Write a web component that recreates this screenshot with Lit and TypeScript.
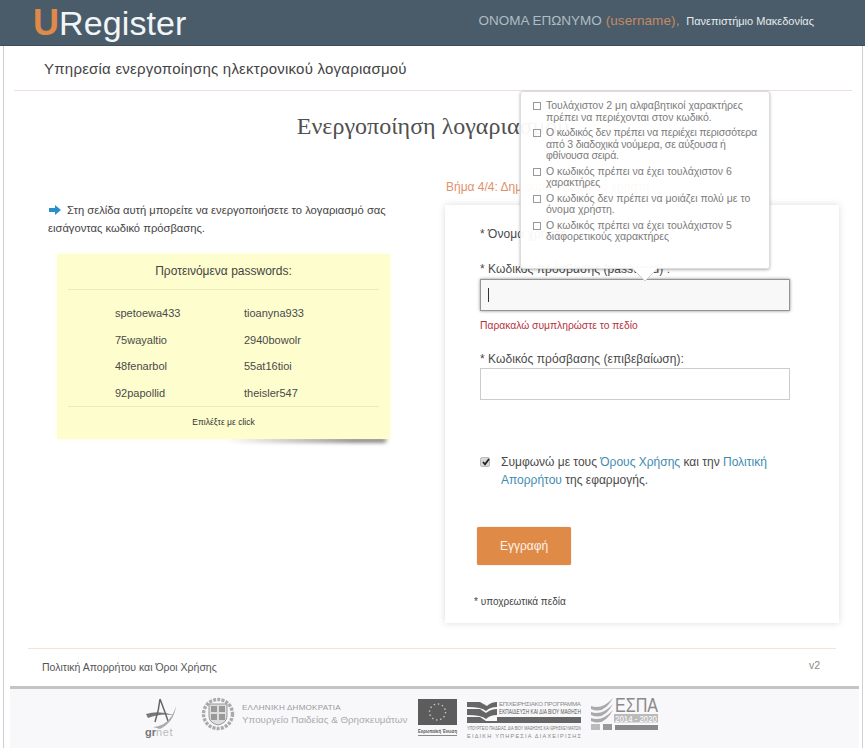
import { LitElement, html, css, svg } from "lit";
import { customElement } from "lit/decorators.js";

const rules = [
  { text: "Τουλάχιστον 2 μη αλφαβητικοί χαρακτήρες πρέπει να περιέχονται στον κωδικό.", tight: false },
  { text: "Ο κωδικός δεν πρέπει να περιέχει περισσότερα από 3 διαδοχικά νούμερα, σε αύξουσα ή φθίνουσα σειρά.", tight: true },
  { text: "Ο κωδικός πρέπει να έχει τουλάχιστον 6 χαρακτήρες", tight: false },
  { text: "Ο κωδικός δεν πρέπει να μοιάζει πολύ με το όνομα χρήστη.", tight: false },
  { text: "Ο κωδικός πρέπει να έχει τουλάχιστον 5 διαφορετικούς χαρακτήρες", tight: false },
];
const pw = ["spetoewa433","tioanyna933","75wayaltio","2940bowolr","48fenarbol","55at16tioi","92papollid","theisler547"];

@customElement("app-root")
export class AppRoot extends LitElement {
  static styles = css`
    :host { display:block; width:865px; height:748px; overflow:hidden; position:relative; background:#fff;
      font-family:"Liberation Sans",Arial,sans-serif; color:#444; }
    * { box-sizing:border-box; }
    header { height:46px; background:#4a5c69; border-bottom:1px solid #3f4e59; display:flex; align-items:center; justify-content:space-between; padding:0 51px 0 33px; }
    .logo { font-size:34px; color:#f2f5f7; letter-spacing:.1px; line-height:46px; }
    .logo b { color:#e08a4a; font-size:36px; }
    .user { font-size:13.5px; color:#aebcc4; padding-bottom:4px; }
    .user em { font-style:normal; color:#c58a62; letter-spacing:.1px; }
    .user small { font-size:11px; color:#e6ebee; margin-left:3px; }
    .page { margin:0 2px 0 3px; border-left:1px solid #cfcfcf; border-right:1px solid #cfcfcf; height:702px; display:flex; flex-direction:column; }
    .sub { flex:none; margin:0 10px; height:45px; border-bottom:1px solid #ecdfe0; padding:14px 0 0 30px; font-size:15px; line-height:18px; color:#444; letter-spacing:.23px; }
    h1 { flex:none; margin:20px 0 0; font:400 24px/30px "Liberation Serif",serif; color:#505050; text-align:center; height:31px; }
    .cols { flex:none; display:grid; grid-template-columns:441px 394px; height:506px; }
    .left { padding:59px 0 0 44px; }
    .info { font-size:11.2px; line-height:18px; color:#444; width:345px; }
    .info svg { vertical-align:-1px; margin-right:3px; margin-left:1px; }
    .notewrap { margin:17px 0 0 9px; width:333px; height:185px; position:relative; z-index:0; }
    .notewrap::after { content:""; position:absolute; z-index:-1; right:4px; bottom:-3px; width:160px; height:7px; background:linear-gradient(90deg,rgba(70,70,70,0),#444 80%); filter:blur(2px); }
    .note { height:100%; background:#fdfdcd; box-shadow:0 0 6px #fdfde8; padding:0 11px; }
    .note .t { height:36px; line-height:35px; text-align:center; font-size:12px; color:#444; border-bottom:1px solid #ece8c0; }
    .grid { display:grid; grid-template-columns:129px 1fr; padding:10px 0 0 47px; grid-auto-rows:26.6px; font-size:11px; line-height:26.6px; color:#4a4a4a; height:117px; border-bottom:1px solid #ece8c0; }
    .note .f { text-align:center; font-size:8.5px; line-height:30px; color:#333; }
    .step { font-size:12px; color:#e0916a; margin-top:36px; height:18px; line-height:18px; padding-left:1px; }
    .card { margin-top:9px; height:418px; background:#fff; box-shadow:0 0 7px rgba(0,0,0,.14); padding:20px 48px 0 35px; }
    label { display:block; font-size:12px; line-height:18px; color:#4a4a4a; letter-spacing:.05px; }
    .inp { width:310px; height:32px; border:1px solid #ccc; background:#fff; display:block; }
    .lp { margin-top:17px; }
    .inp.focus { margin-top:1px; background:#f8f8f8; border:1px solid #959595; box-shadow:0 0 3px rgba(0,0,0,.45); position:relative; }
    .inp.focus::before { content:""; position:absolute; left:7px; top:8px; width:1px; height:14px; background:#333; }
    .err { font-size:10.3px; color:#b3333f; margin-top:8px; line-height:14px; }
    .l3 { margin-top:17px; }
    .terms { display:flex; margin-top:53px; font-size:12px; line-height:18px; color:#4a4a4a; }
    .cb { width:10px; height:10px; background:#d8d8d8; border:1px solid #bbb; border-radius:2px; flex:none; margin:4px 11px 0 0; position:relative; }
    .cb svg { position:absolute; left:0; top:-1px; }
    a { color:#3e8bb0; text-decoration:none; }
    .btn { margin:38px 0 0 -3px; width:94px; height:38px; background:#e08a48; border-radius:2px; color:#fdf3ea; display:flex; align-items:center; justify-content:center; font-size:12px; box-shadow:0 0 1px #c77; }
    .req { margin:30px 0 0 -6px; font-size:10px; line-height:14px; color:#444; }
    .foot { flex:none; margin:0 26px 0 24px; height:39px; border-top:1px solid #f3e4da; display:flex; justify-content:space-between; padding:12px 16px 0 14px; font-size:10.5px; color:#555; }
    .foot span:last-child { color:#888; margin-top:-2px; }
    .tip { position:absolute; left:520px; top:91px; width:250px; height:178px; background:rgba(255,255,255,.94); border:1px solid #dcdcdc; border-radius:3px; box-shadow:0 1px 3px rgba(0,0,0,.3); padding:8px 5px 0 12px; font-size:10.5px; line-height:11.5px; color:#7c7c7c; }
    .tip .row { display:flex; margin-bottom:4px; }
    .tip .row.tight { letter-spacing:-.2px; padding-right:3px; }
    .tip i { width:8px; height:8px; border:1px solid #999; flex:none; margin:2px 5px 0 0; }
    .tip .arr { position:absolute; left:111px; bottom:-14px; }
    .logos { position:absolute; left:10px; right:6px; top:686px; height:62px; background:#f8f8fb; border-top:3px solid #c4c4c4; }
    .logos svg { position:absolute; left:0; top:-3px; display:block; }
  `;

  logos() {
    return svg`<svg width="849" height="62" viewBox="10 686 849 62" font-family="Liberation Sans,Arial,sans-serif">
      <path d="M146 714 Q158 710 174 715 Q160 713 148 718Z" fill="#777"/>
      <path d="M160 699 Q159 710 155 722 M160 699 Q165 712 168 721" stroke="#666" stroke-width="1.5" fill="none"/>
      <path d="M153 727 Q170 726 176 706 Q174 722 160 729Z" fill="#aaa"/>
      <text x="145" y="736" font-size="11" font-weight="700" fill="#777">gr<tspan fill="#bbb" font-weight="400" letter-spacing=".6">net</tspan></text>
      <circle cx="218" cy="714" r="14.5" fill="none" stroke="#aaa" stroke-width="3.4" stroke-dasharray="3 1.2"/>
      <path d="M209 704h18v12q0 7-9 9q-9-2-9-9z" fill="#ddd" stroke="#999"/>
      <rect x="211" y="706" width="6" height="6" fill="#999"/><rect x="219" y="706" width="6" height="6" fill="#999"/>
      <rect x="211" y="714" width="6" height="6" fill="#999"/><rect x="219" y="714" width="6" height="6" fill="#999"/>
      <text x="242" y="710" font-size="8.1" fill="#999" letter-spacing=".2">ΕΛΛΗΝΙΚΗ ΔΗΜΟΚΡΑΤΙΑ</text>
      <text x="242" y="723" font-size="9.8" fill="#aaa">Υπουργείο Παιδείας &amp; Θρησκευμάτων</text>
      <rect x="418" y="699" width="39" height="26" fill="#5c5c5c"/>
      <circle cx="437.5" cy="712" r="8" fill="none" stroke="#c8c8c8" stroke-width="1.4" stroke-dasharray="1.4 2.8"/>
      <text x="418" y="733" font-size="5" font-weight="700" fill="#555" textLength="39" lengthAdjust="spacingAndGlyphs">Ευρωπαϊκή Ένωση</text>
      <rect x="418" y="735" width="39" height="1" fill="#888"/>
      <path d="M467 702 H480 L487 706 Q491 702 497 702 V707 Q490 707 486 711 Q482 707 467 707Z" fill="#666"/>
      <path d="M467 709 H480 L486 713 Q491 709 497 709 V715 Q490 715 486 719 Q482 715 467 715Z" fill="#666"/>
      <path d="M467 717 H480 L486 721 H497 V723 H467Z" fill="#666"/>
      <text x="499" y="706" font-size="6.2" fill="#888" textLength="82" lengthAdjust="spacing">ΕΠΙΧΕΙΡΗΣΙΑΚΟ ΠΡΟΓΡΑΜΜΑ</text>
      <text x="499" y="714" font-size="7" fill="#555" textLength="82" lengthAdjust="spacingAndGlyphs">ΕΚΠΑΙΔΕΥΣΗ ΚΑΙ ΔΙΑ ΒΙΟΥ ΜΑΘΗΣΗ</text>
      <rect x="497" y="717" width="84" height="6" fill="#666"/>
      <text x="467" y="730" font-size="5" fill="#777" textLength="114" lengthAdjust="spacingAndGlyphs">ΥΠΟΥΡΓΕΙΟ ΠΑΙΔΕΙΑΣ, ΔΙΑ ΒΙΟΥ ΜΑΘΗΣΗΣ ΚΑΙ ΘΡΗΣΚΕΥΜΑΤΩΝ</text>
      <text x="467" y="738" font-size="5.6" fill="#888" textLength="114" lengthAdjust="spacing">ΕΙΔΙΚΗ ΥΠΗΡΕΣΙΑ ΔΙΑΧΕΙΡΙΣΗΣ</text>
      <path d="M591 706 Q602 710 613 698 Q604 715 591 709Z M591 712 Q602 716 613 704 Q604 721 591 715Z M591 718 Q602 722 613 710 Q604 727 591 721Z" fill="#aaa"/>
      <text x="615" y="712" font-size="21" fill="#8a8a8a" textLength="43" lengthAdjust="spacingAndGlyphs">ΕΣΠΑ</text>
      <rect x="614" y="714" width="44" height="8.5" fill="#bbb"/>
      <text x="615" y="721.5" font-size="8.5" fill="#fff" textLength="42" lengthAdjust="spacingAndGlyphs">2014 - 2020</text>
      <rect x="591" y="724" width="9" height="6" fill="#bbb"/><rect x="603" y="724" width="9" height="6" fill="#999"/><rect x="615" y="725" width="43" height="5" fill="#888"/>
    </svg>`;
  }

  render() {
    return html`
      <header>
        <div class="logo"><b>U</b>Register</div>
        <div class="user">ΟΝΟΜΑ ΕΠΩΝΥΜΟ <em>(username),</em> <small>Πανεπιστήμιο Μακεδονίας</small></div>
      </header>
      <div class="page">
        <div class="sub">Υπηρεσία ενεργοποίησης ηλεκτρονικού λογαριασμού</div>
        <h1>Ενεργοποίηση λογαριασμού</h1>
        <div class="cols">
          <div class="left">
            <div class="info"><svg width="12" height="10" viewBox="0 0 12 10"><path d="M0 3h6V0l6 5-6 5V7H0z" fill="#2a8fc9"/></svg> Στη σελίδα αυτή μπορείτε να ενεργοποιήσετε το λογαριασμό σας εισάγοντας κωδικό πρόσβασης.</div>
            <div class="notewrap"><div class="note">
              <div class="t">Προτεινόμενα passwords:</div>
              <div class="grid">${pw.map((p) => html`<div>${p}</div>`)}</div>
              <div class="f">Επιλέξτε με click</div>
            </div></div>
          </div>
          <div>
            <div class="step">Βήμα 4/4: Δημιουργία κωδικού χρήστη</div>
            <div class="card">
              <label>* Όνομα χρήστη:</label>
              <label class="lp">* Κωδικός πρόσβασης (password) :</label>
              <div class="inp focus"></div>
              <div class="err">Παρακαλώ συμπληρώστε το πεδίο</div>
              <label class="l3">* Κωδικός πρόσβασης (επιβεβαίωση):</label>
              <div class="inp"></div>
              <div class="terms">
                <span class="cb"><svg width="10" height="10" viewBox="0 0 10 10"><path d="M2 5l2 2.4L8 2" stroke="#222" stroke-width="1.8" fill="none"/></svg></span>
                <div>
                  <div>Συμφωνώ με τους <a>Όρους Χρήσης</a> και την <a>Πολιτική</a></div>
                  <div><a>Απορρήτου</a> της εφαρμογής.</div>
                </div>
              </div>
              <div class="btn">Εγγραφή</div>
              <div class="req">* υποχρεωτικά πεδία</div>
            </div>
          </div>
        </div>
        <div class="foot"><span>Πολιτική Απορρήτου και Όροι Χρήσης</span><span>v2</span></div>
      </div>
      <div class="tip">
        ${rules.map((r) => html`<div class="row ${r.tight ? "tight" : ""}"><i></i><span>${r.text}</span></div>`)}
        <svg class="arr" width="26" height="14" viewBox="0 0 26 14"><path d="M0 0L13 13 26 0" fill="#fff" stroke="#cfcfcf"/><path d="M1 0h24" stroke="#fff" stroke-width="2"/></svg>
      </div>
      <div class="logos">${this.logos()}</div>
    `;
  }
}
